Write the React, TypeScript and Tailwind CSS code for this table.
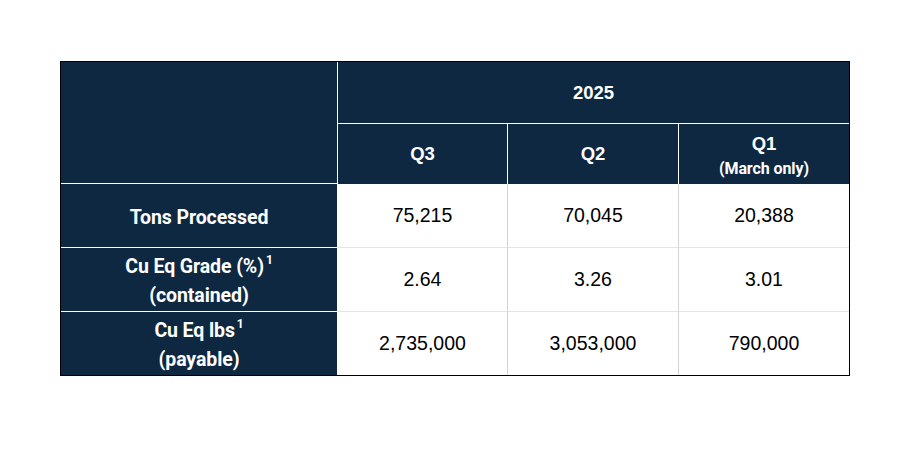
import type { ReactNode } from "react";

const navy = "bg-[#0e2841] text-white";
const label = "font-['Roboto',sans-serif] font-bold text-[19.5px] tracking-[-0.005em]";
const head = "font-['Liberation_Sans',Arial,sans-serif] font-bold text-[18.5px]";
const num = "font-['Liberation_Sans',Arial,sans-serif] text-[19.5px] text-black";

function Sup() {
  return <span className="relative -top-[9px] ml-[2px] text-[12px] font-bold leading-none">1</span>;
}

function RowLabel({ children, last }: { children: ReactNode; last?: boolean }) {
  return (
    <div
      className={`${navy} ${label} flex flex-col items-center justify-center border-r border-white leading-[29px] pt-[3px] ${
        last ? "" : "border-b"
      }`}
    >
      {children}
    </div>
  );
}

function Cell({ value, right, last }: { value: string; right?: boolean; last?: boolean }) {
  return (
    <div
      className={`${num} flex items-center justify-center bg-white ${right ? "border-r border-r-[#d4d4d4]" : ""} ${
        last ? "" : "border-b border-b-[#e4e4e4]"
      }`}
    >
      {value}
    </div>
  );
}

const rows = [
  { label: <span>Tons Processed</span>, values: ["75,215", "70,045", "20,388"] },
  {
    label: (
      <>
        <span>
          Cu Eq Grade (%)
          <Sup />
        </span>
        <span>(contained)</span>
      </>
    ),
    values: ["2.64", "3.26", "3.01"],
  },
  {
    label: (
      <>
        <span>
          Cu Eq lbs
          <Sup />
        </span>
        <span>(payable)</span>
      </>
    ),
    values: ["2,735,000", "3,053,000", "790,000"],
  },
];

export default function App() {
  return (
    <div className="w-[911px] h-[475px] bg-white pt-[61px] pl-[60px]">
      <div className="w-[790px] border border-black grid grid-cols-[277px_170px_171px_170px] grid-rows-[62px_60px_64px_64px_63px]">
        {/* header */}
        <div className={`${navy} row-span-2 border-r border-b border-white`} />
        <div className={`${navy} ${head} col-span-3 flex items-center justify-center border-b border-white`}>
          2025
        </div>
        <div className={`${navy} ${head} flex items-center justify-center border-r border-white`}>Q3</div>
        <div className={`${navy} ${head} flex items-center justify-center border-r border-white`}>Q2</div>
        <div className={`${navy} flex flex-col items-center justify-center pt-[6px]`}>
          <span className={`${head} leading-[24px]`}>Q1</span>
          <span className="font-['Roboto',sans-serif] font-bold text-[16px] leading-[26px] tracking-[-0.005em]">
            (March only)
          </span>
        </div>

        {/* body */}
        {rows.map((r, i) => {
          const last = i === rows.length - 1;
          return [
            <RowLabel key={`l${i}`} last={last}>
              {r.label}
            </RowLabel>,
            ...r.values.map((v, j) => <Cell key={`c${i}${j}`} value={v} right={j < 2} last={last} />),
          ];
        })}
      </div>
    </div>
  );
}
